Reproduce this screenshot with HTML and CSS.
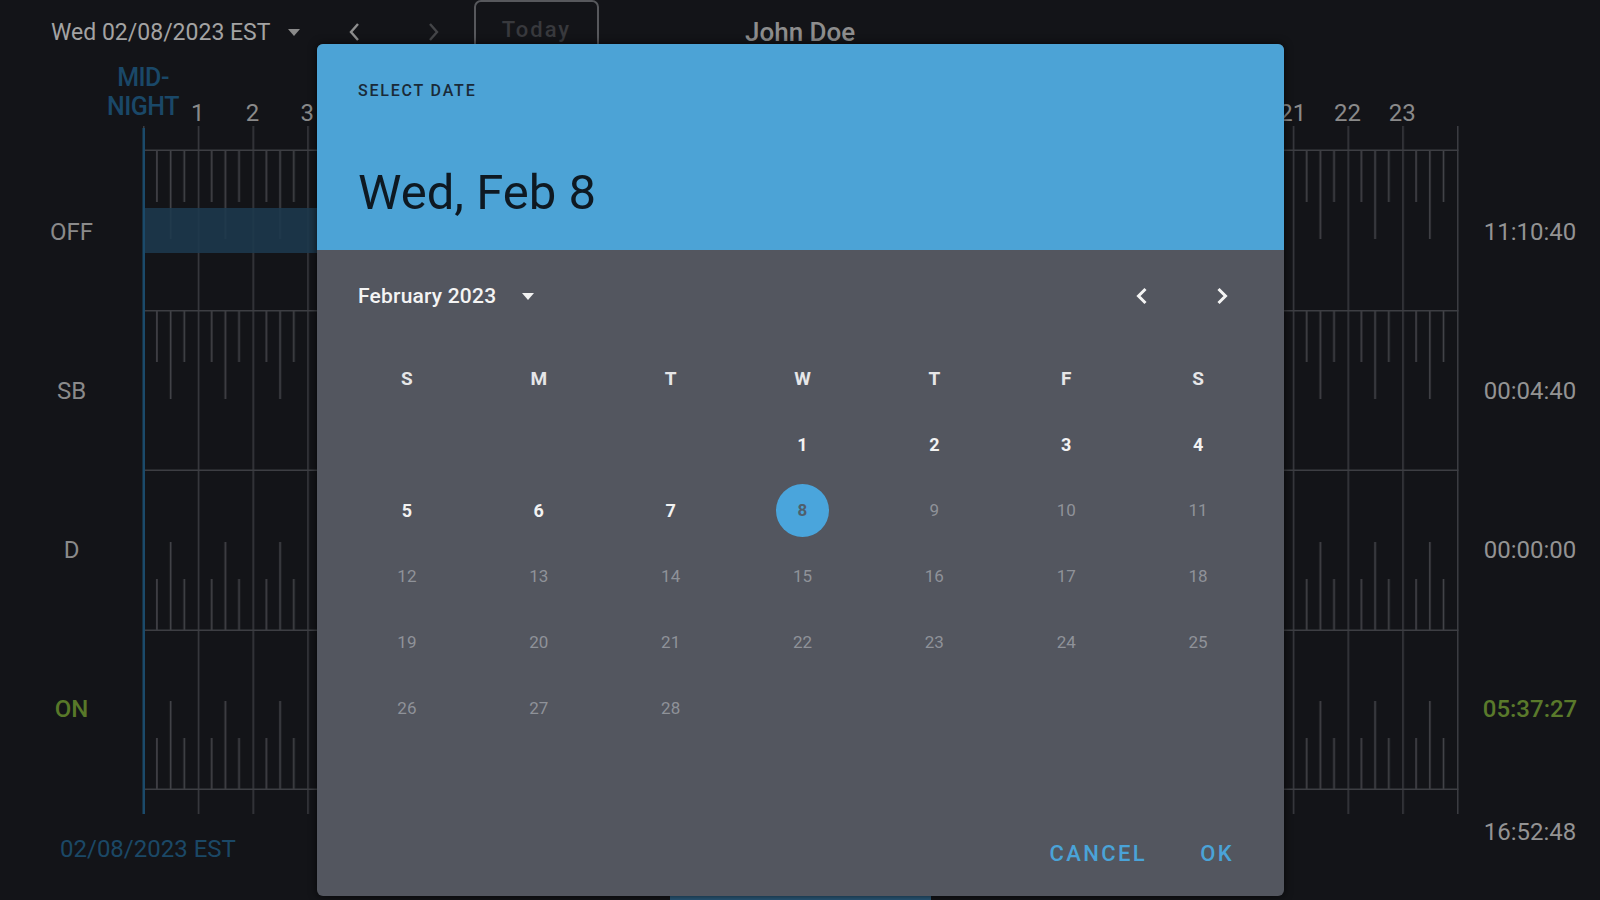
FILE: index.html
```html
<!DOCTYPE html>
<html>
<head>
<meta charset="utf-8">
<link rel="stylesheet" href="styles.css">
</head>
<body>
<div class="screen">
  <header class="topbar">
    <span class="date-sel">Wed 02/08/2023 EST</span>
    <svg class="caret" width="12" height="7" viewBox="0 0 12 7"><path d="M0 0 L12 0 L6 7 Z" fill="#8a8a8a"/></svg>
    <svg class="nav nav-prev" width="12" height="20" viewBox="0 0 12 20"><path d="M10 2 L3 10 L10 18" fill="none" stroke="#8e8e8e" stroke-width="2.4"/></svg>
    <svg class="nav nav-next" width="12" height="20" viewBox="0 0 12 20"><path d="M2 2 L9 10 L2 18" fill="none" stroke="#444548" stroke-width="2.4"/></svg>
    <div class="today">Today</div>
    <span class="driver">John Doe</span>
  </header>

  <main class="log">
    <div class="status-col">
      <div class="status">OFF</div>
      <div class="status">SB</div>
      <div class="status">D</div>
      <div class="status status-on">ON</div>
      <div class="log-date">02/08/2023 EST</div>
    </div>

    <svg class="chart" width="1317" height="760" viewBox="0 0 1317 760">
      <defs>
        <pattern id="hours" width="54.75" height="760" patternUnits="userSpaceOnUse">
          <rect x="0" y="0" width="1.5" height="760" fill="#3b3c41"/>
        </pattern>
        <pattern id="tickDown" width="54.75" height="88" patternUnits="userSpaceOnUse">
          <rect x="13.1" y="0" width="1.6" height="51" fill="#44454a"/>
          <rect x="26.8" y="0" width="1.6" height="88" fill="#44454a"/>
          <rect x="40.5" y="0" width="1.6" height="51" fill="#44454a"/>
        </pattern>
        <pattern id="tickUp" width="54.75" height="88" patternUnits="userSpaceOnUse">
          <rect x="13.1" y="37" width="1.6" height="51" fill="#44454a"/>
          <rect x="26.8" y="0" width="1.6" height="88" fill="#44454a"/>
          <rect x="40.5" y="37" width="1.6" height="51" fill="#44454a"/>
        </pattern>
      </defs>

      <text class="midnight" x="0" y="22">MID-</text>
      <text class="midnight" x="0" y="51">NIGHT</text>

      <g class="hour-labels">
        <text x="54.75" y="57">1</text><text x="109.5" y="57">2</text><text x="164.25" y="57">3</text>
        <text x="219" y="57">4</text><text x="273.75" y="57">5</text><text x="328.5" y="57">6</text>
        <text x="383.25" y="57">7</text><text x="438" y="57">8</text><text x="492.75" y="57">9</text>
        <text x="547.5" y="57">10</text><text x="602.25" y="57">11</text><text x="657" y="57">12</text>
        <text x="711.75" y="57">13</text><text x="766.5" y="57">14</text><text x="821.25" y="57">15</text>
        <text x="876" y="57">16</text><text x="930.75" y="57">17</text><text x="985.5" y="57">18</text>
        <text x="1040.25" y="57">19</text><text x="1095" y="57">20</text><text x="1149.75" y="57">21</text>
        <text x="1204.5" y="57">22</text><text x="1259.25" y="57">23</text>
      </g>

      <rect x="0" y="62" width="1316" height="688" fill="url(#hours)"/>

      <g transform="translate(0,87)"><rect x="0" y="0" width="1314" height="88" fill="url(#tickDown)"/></g>
      <g transform="translate(0,247)"><rect x="0" y="0" width="1314" height="88" fill="url(#tickDown)"/></g>
      <g transform="translate(0,478)"><rect x="0" y="0" width="1314" height="88" fill="url(#tickUp)"/></g>
      <g transform="translate(0,637)"><rect x="0" y="0" width="1314" height="88" fill="url(#tickUp)"/></g>

      <rect x="0" y="85.5" width="1315.5" height="1.5" fill="#3d3e43"/>
      <rect x="0" y="246" width="1315.5" height="1.5" fill="#3d3e43"/>
      <rect x="0" y="405.5" width="1315.5" height="1.5" fill="#3d3e43"/>
      <rect x="0" y="565.5" width="1315.5" height="1.5" fill="#3d3e43"/>
      <rect x="0" y="724.5" width="1315.5" height="1.5" fill="#3d3e43"/>

      <rect x="0" y="144" width="640" height="45" fill="#1c394d" fill-opacity="0.88"/>
      <rect x="-0.5" y="64" width="2.5" height="686" fill="#1b4a6a"/>
    </svg>

    <div class="time-col">
      <div class="time">11:10:40</div>
      <div class="time">00:04:40</div>
      <div class="time">00:00:00</div>
      <div class="time time-on">05:37:27</div>
      <div class="time-total">16:52:48</div>
    </div>
  </main>

  <div class="bottom-tab"></div>

  <section class="dialog">
    <div class="dlg-head">
      <div class="dlg-label">SELECT DATE</div>
      <div class="dlg-title">Wed, Feb 8</div>
    </div>
    <div class="dlg-body">
      <div class="month-row">
        <span class="month">February 2023</span>
        <svg class="month-caret" width="12" height="7" viewBox="0 0 12 7"><path d="M0 0 L12 0 L6 7 Z" fill="#f2f2f2"/></svg>
        <span class="spacer"></span>
        <div class="month-nav">
          <svg class="mnav" width="40" height="24" viewBox="0 0 40 24"><path d="M23.5 5 L16.5 12 L23.5 19" fill="none" stroke="#f4f4f4" stroke-width="3"/></svg>
          <svg class="mnav" width="40" height="24" viewBox="0 0 40 24"><path d="M16.5 5 L23.5 12 L16.5 19" fill="none" stroke="#f4f4f4" stroke-width="3"/></svg>
        </div>
      </div>
      <div class="weekdays">
        <span>S</span><span>M</span><span>T</span><span>W</span><span>T</span><span>F</span><span>S</span>
      </div>
      <div class="days">
        <span></span><span></span><span></span>
        <span class="day on">1</span><span class="day on">2</span><span class="day on">3</span><span class="day on">4</span>
        <span class="day on">5</span><span class="day on">6</span><span class="day on">7</span>
        <span class="day sel"><b>8</b></span>
        <span class="day">9</span><span class="day">10</span><span class="day">11</span>
        <span class="day">12</span><span class="day">13</span><span class="day">14</span><span class="day">15</span>
        <span class="day">16</span><span class="day">17</span><span class="day">18</span>
        <span class="day">19</span><span class="day">20</span><span class="day">21</span><span class="day">22</span>
        <span class="day">23</span><span class="day">24</span><span class="day">25</span>
        <span class="day">26</span><span class="day">27</span><span class="day">28</span>
      </div>
      <div class="actions">
        <span class="btn">CANCEL</span>
        <span class="btn">OK</span>
      </div>
    </div>
  </section>
</div>
</body>
</html>
```

FILE: styles.css
```css
html, body {
  margin: 0;
  padding: 0;
  background: #131418;
}

.screen {
  position: relative;
  width: 1600px;
  height: 900px;
  overflow: hidden;
  background: #131418;
  font-family: Roboto, "Liberation Sans", sans-serif;
  color: #8c8c8c;
}

/* ---------- top bar ---------- */
.topbar {
  height: 64px;
  display: flex;
  align-items: center;
  padding-left: 51px;
  box-sizing: border-box;
}

.date-sel {
  width: 218px;
  white-space: nowrap;
  font-size: 23px;
  color: #a3a3a3;
}

.caret {
  margin-left: 19px;
}

.nav-prev {
  margin-left: 48px;
}

.nav-next {
  margin-left: 68px;
}

.today {
  align-self: flex-start;
  margin-left: 34px;
  width: 125px;
  height: 58px;
  box-sizing: border-box;
  border: 2px solid #57585c;
  border-radius: 7px;
  display: flex;
  align-items: center;
  justify-content: center;
  font-size: 22px;
  font-weight: 500;
  letter-spacing: 2px;
  color: #38393d;
}

.driver {
  margin-left: 146px;
  font-size: 26px;
  font-weight: 500;
  color: #8d8d8d;
}

/* ---------- log chart ---------- */
.log {
  display: flex;
  align-items: flex-start;
}

.status-col {
  width: 143px;
  flex: none;
  padding-top: 88px;
  display: flex;
  flex-direction: column;
}

.status {
  height: 159px;
  display: flex;
  align-items: center;
  justify-content: center;
  font-size: 24px;
  color: #8a8a8a;
}

.status-on {
  color: #587829;
  font-weight: 500;
}

.log-date {
  margin-top: 41px;
  height: 40px;
  line-height: 40px;
  padding-left: 60px;
  white-space: nowrap;
  font-size: 24px;
  color: #1b4866;
}

.chart {
  flex: none;
  overflow: visible;
  display: block;
}

.midnight {
  font-family: Roboto, "Liberation Sans", sans-serif;
  font-size: 25px;
  font-weight: 500;
  fill: #1a4868;
  text-anchor: middle;
  letter-spacing: -0.5px;
}

.hour-labels text {
  font-family: Roboto, "Liberation Sans", sans-serif;
  font-size: 24px;
  fill: #8a8a8a;
  text-anchor: middle;
}

.time-col {
  flex: 1;
  padding-top: 88px;
  display: flex;
  flex-direction: column;
  align-items: center;
}

.time {
  height: 159px;
  display: flex;
  align-items: center;
  font-size: 24px;
  color: #939393;
}

.time-on {
  color: #5a7a2b;
  font-weight: 500;
}

.time-total {
  margin-top: 24px;
  height: 40px;
  line-height: 40px;
  font-size: 24px;
  color: #939393;
}

.bottom-tab {
  position: absolute;
  left: 670px;
  bottom: 0;
  width: 261px;
  height: 5px;
  background: #2a5a7b;
}

/* ---------- date picker dialog ---------- */
.dialog {
  position: absolute;
  left: 317px;
  top: 44px;
  width: 967px;
  height: 852px;
  border-radius: 6px;
  overflow: hidden;
  background: #53565f;
  display: flex;
  flex-direction: column;
  box-shadow: 0 0 8px rgba(0, 0, 0, 0.7);
}

.dlg-head {
  height: 206px;
  flex: none;
  background: #4ca3d6;
  padding: 0 41px;
  box-sizing: border-box;
  display: flex;
  flex-direction: column;
}

.dlg-label {
  margin-top: 37px;
  height: 20px;
  line-height: 20px;
  font-size: 16px;
  font-weight: 500;
  letter-spacing: 1.8px;
  color: #1a2a38;
}

.dlg-title {
  margin-top: 64px;
  height: 56px;
  line-height: 56px;
  font-size: 49px;
  color: #0e1922;
}

.dlg-body {
  flex: 1;
  display: flex;
  flex-direction: column;
  padding: 0 20px 0 24px;
}

.month-row {
  height: 95px;
  display: flex;
  align-items: center;
  padding: 0 22px 4px 17px;
  box-sizing: border-box;
}

.month {
  font-size: 21px;
  font-weight: 500;
  letter-spacing: 0.2px;
  color: #f4f4f4;
}

.month-caret {
  margin-left: 26px;
  margin-top: 2px;
}

.spacer {
  flex: 1;
}

.month-nav {
  display: flex;
  gap: 40px;
}

.mnav {
  display: block;
}

.weekdays,
.days {
  display: grid;
  grid-template-columns: repeat(7, 1fr);
}

.weekdays span {
  height: 66px;
  display: flex;
  align-items: center;
  justify-content: center;
  font-size: 19px;
  font-weight: 700;
  color: #e6e6e8;
}

.days span {
  height: 66px;
  display: flex;
  align-items: center;
  justify-content: center;
}

.day {
  font-size: 17px;
  color: #8f9299;
}

.day.on {
  font-weight: 700;
  font-size: 18px;
  color: #f2f2f2;
}

.day.sel b {
  width: 53px;
  height: 53px;
  border-radius: 50%;
  background: #4aa5dc;
  display: flex;
  align-items: center;
  justify-content: center;
  font-size: 17px;
  font-weight: 700;
  color: #4f5f6c;
}

.actions {
  margin-top: auto;
  height: 40px;
  margin-bottom: 23px;
  padding-right: 30px;
  display: flex;
  justify-content: flex-end;
  align-items: center;
  gap: 53px;
}

.btn {
  font-size: 22px;
  font-weight: 500;
  letter-spacing: 2.4px;
  color: #4aa3d8;
}
```
